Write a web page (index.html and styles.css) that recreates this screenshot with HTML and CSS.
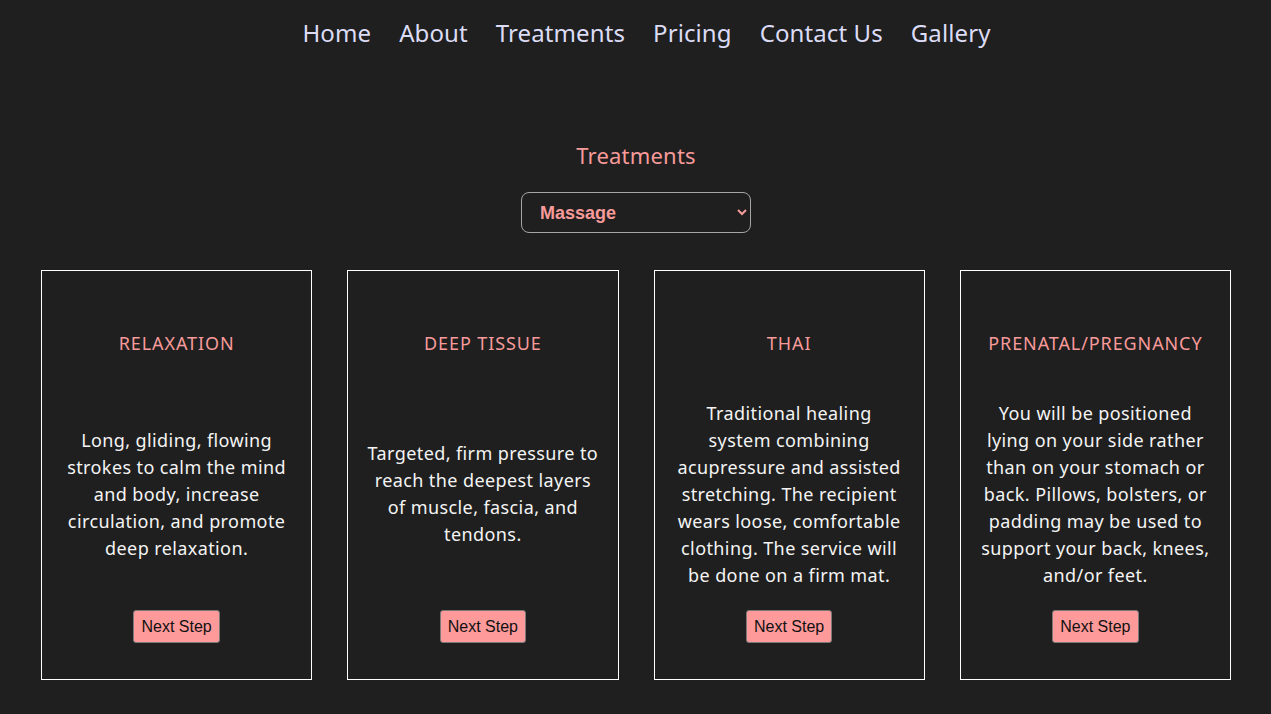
FILE: index.html
```html
<!DOCTYPE html>
<html lang="en">
<head>
<meta charset="utf-8">
<title>Treatments</title>
<link rel="stylesheet" href="styles.css">
</head>
<body>
<nav class="nav">
  <a href="#">Home</a>
  <a href="#">About</a>
  <a href="#">Treatments</a>
  <a href="#">Pricing</a>
  <a href="#">Contact Us</a>
  <a href="#">Gallery</a>
</nav>
<main class="main">
  <h1 class="heading">Treatments</h1>
  <div class="select-row">
    <select class="picker">
      <option>Massage</option>
      <option>Facial</option>
      <option>Body Treatment</option>
    </select>
  </div>
  <section class="cards">
    <article class="card">
      <h2 class="card-title">RELAXATION</h2>
      <p class="card-text">Long, gliding, flowing strokes to calm the mind and body, increase circulation, and promote deep relaxation.</p>
      <div class="card-action"><button class="btn">Next Step</button></div>
    </article>
    <article class="card">
      <h2 class="card-title">DEEP TISSUE</h2>
      <p class="card-text">Targeted, firm pressure to reach the deepest layers of muscle, fascia, and tendons.</p>
      <div class="card-action"><button class="btn">Next Step</button></div>
    </article>
    <article class="card">
      <h2 class="card-title">THAI</h2>
      <p class="card-text">Traditional healing system combining acupressure and assisted stretching. The recipient wears loose, comfortable clothing. The service will be done on a firm mat.</p>
      <div class="card-action"><button class="btn">Next Step</button></div>
    </article>
    <article class="card">
      <h2 class="card-title">PRENATAL/PREGNANCY</h2>
      <p class="card-text">You will be positioned lying on your side rather than on your stomach or back. Pillows, bolsters, or padding may be used to support your back, knees, and/or feet.</p>
      <div class="card-action"><button class="btn">Next Step</button></div>
    </article>
  </section>
</main>
</body>
</html>
```
FILE: styles.css
```css
html, body {
  margin: 0;
  padding: 0;
  background: #1f1f1f;
  height: 100%;
}
body {
  font-family: "Noto Sans", "Open Sans", sans-serif;
  color: #f2f2f2;
}
.nav {
  height: 66px;
  display: flex;
  justify-content: center;
  align-items: center;
  gap: 28px;
  padding-left: 22px;
}
.nav a {
  color: #dcdcf6;
  text-decoration: none;
  font-size: 24px;
  line-height: 30px;
  letter-spacing: 0.1px;
}
.main {
  padding: 0 40px 0 41px;
}
.heading {
  margin: 74px 0 0;
  text-align: center;
  font-size: 22px;
  line-height: 30px;
  font-weight: 400;
  color: #f79a9a;
  letter-spacing: 0.2px;
}
.select-row {
  display: flex;
  justify-content: center;
  margin-top: 22px;
}
.picker {
  width: 230px;
  height: 41px;
  box-sizing: border-box;
  background: #1f1f1f;
  color: #f79a9a;
  border: 1px solid #a6a6a6;
  border-radius: 8px;
  font-family: "Liberation Sans", Arial, sans-serif;
  font-weight: 700;
  font-size: 18px;
  padding: 0 8px 0 14px;
}
.cards {
  margin-top: 37px;
  display: grid;
  grid-template-columns: repeat(4, 1fr);
  gap: 35px;
}
.card {
  border: 1px solid #ffffff;
  height: 408px;
  display: grid;
  grid-template-rows: 144px 158px 1fr;
  align-items: center;
  justify-items: center;
  text-align: center;
}
.card-title {
  margin: 0;
  font-size: 18px;
  line-height: 24px;
  font-weight: 400;
  color: #f79a9a;
  letter-spacing: 0.9px;
}
.card-text {
  margin: 0;
  width: 231.4px;
  font-size: 18px;
  line-height: 27px;
  letter-spacing: 0.4px;
  color: #f4f4f4;
}
.card-action {
  display: flex;
  justify-content: center;
}
.btn {
  background: #ff9a9a;
  color: #111;
  border: 1px solid #7a7a7a;
  border-radius: 3px;
  font-family: "Liberation Sans", Arial, sans-serif;
  font-size: 16px;
  line-height: 19px;
  padding: 6px 7px;
  min-height: 33px;
}
```
